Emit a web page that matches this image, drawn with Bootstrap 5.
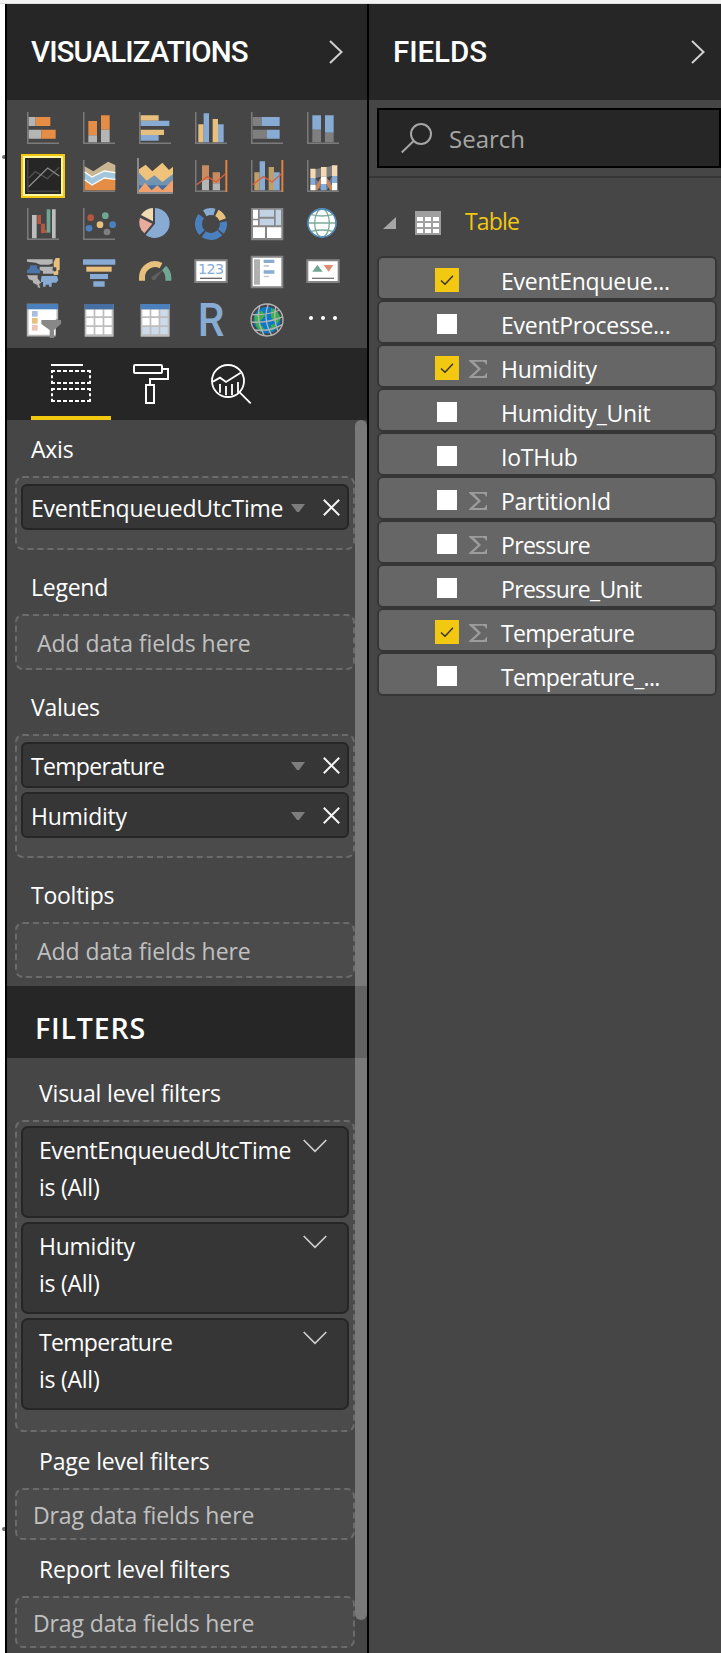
<!DOCTYPE html>
<html lang="en">
<head>
<meta charset="utf-8">
<meta name="viewport" content="width=device-width, initial-scale=1">
<title>Visualizations and Fields</title>
<link href="https://cdn.jsdelivr.net/npm/bootstrap@5.3.0/dist/css/bootstrap.min.css" rel="stylesheet">
<script src="https://cdn.jsdelivr.net/npm/bootstrap@5.3.0/dist/js/bootstrap.bundle.min.js"></script>
<style>
:root{--panel:#464646;--dark:#262626;--pill:#363636;--accent:#f2c811}
body{background:#fff;font-family:"Open Sans","Noto Sans",sans-serif;font-size:23px;letter-spacing:-.25px;color:#fff;line-height:30px;height:1653px;overflow:hidden}
svg{display:block;flex:none;overflow:visible}
.topline{height:4px;background:#f2f2f2;border-bottom:1px solid #dcdcdc}
.gutter{width:5px;background:#fff}
.gutter i{position:absolute;left:2px;width:3px;height:4px;background:#707070;border-radius:2px 0 0 2px}
.pane-viz{width:364px;background:var(--panel);border-left:2px solid #000;border-right:2px solid #000}
.pane-fields{background:var(--panel)}
.pane-head{height:96px;background:var(--dark);padding:0 24px;font-family:Roboto,sans-serif;font-weight:500;font-size:29.5px;letter-spacing:-.9px}
.pane-fields .pane-head{letter-spacing:-.05px}
.gallery{display:grid;grid-template-columns:repeat(6,56px);grid-auto-rows:48px;padding:4px 8px;height:248px;place-items:center}
.chosen{width:44px;height:44px;border:2px solid var(--accent);box-shadow:inset 0 0 0 2px #fff6a0;background:var(--dark)}
.tabs{height:72px;background:var(--dark);padding-left:24px}
.tabs .current{box-shadow:inset 0 -4px var(--accent)}
.wells{height:1233px}
.thumb{right:0;top:0;width:12px;height:1200px;border-radius:6px;background:rgba(255,255,255,.28)}
.cap{height:64px;padding:0 24px 12px}
.cap-first{height:56px}
.cap-visual{height:62px;padding-left:32px;letter-spacing:-.15px}
.cap-level{height:56px;padding-left:32px;letter-spacing:-.17px}
.well{width:340px;margin-left:8px;border:2px dashed #6b6b6b;border-radius:8px;background:#4b4b4b;padding:6px 4px 18px}
.well-empty{height:56px;padding:1px 20px 0;color:#c0c0c0;letter-spacing:-.07px}
.well-drag{height:52px;padding:2px 16px 0;color:#c0c0c0;letter-spacing:-.12px}
.pill{height:46px;background:var(--pill);border:2px solid var(--dark);border-radius:6px;padding:1px 7px 0 8px}
.pill + .pill,.fcard + .fcard{margin-top:4px}
.pill .drop{margin-right:18px}
.snug{letter-spacing:-.68px}
.well-filters{padding:4px 4px 20px}
.fcard{height:92px;background:var(--pill);border:2px solid var(--dark);border-radius:7px;padding:4px 20px 0 16px;line-height:37px}
.fcard svg{margin-top:7px}
.filters-head{height:72px;margin-top:8px;background:var(--dark);padding:11px 28px 0;font-weight:600;font-size:28.5px;letter-spacing:.8px}
.searchbox{height:60px;margin:8px 0 8px 8px;background:var(--dark);border:2px solid #000;padding:1px 0 0 22px;color:#a6a6a6;font-size:24px;letter-spacing:0}
.searchbox svg{margin-right:18px}
.rule{height:2px;background:#363636}
.tablerow{height:78px;padding-left:14px;color:var(--accent);letter-spacing:-.85px}
.tablerow svg{margin-top:12px}
.tablerow .grid-ic{margin-left:19px;margin-top:12px}
.fieldlist{margin:0 4px 0 8px}
.field{height:44px;background:#666;border:2px solid var(--pill);border-radius:6px;padding-left:56px}
.tick{width:24px;height:24px;margin-top:4px;background:var(--accent)}
.blank{width:20px;height:20px;background:#fff;margin:4px 2px 0}
.sig{width:20px;margin:2px 12px 0 10px}
.fname{padding-top:5px}
</style>
</head>
<body>
<svg width="0" height="0" class="position-absolute" aria-hidden="true">
<defs>
<symbol id="axes" viewBox="0 0 96 96"><path d="M2 0V94H96" fill="none" stroke="#7b7b7b" stroke-width="5"/></symbol>
<symbol id="right" viewBox="0 0 14 24"><path d="M1 1 12.500 12 1 23" fill="none" stroke="#d0d0d0" stroke-width="2"/></symbol>
<symbol id="down" viewBox="0 0 24 14"><path d="M.7 1 12 12.300 23.300 1" fill="none" stroke="#d0d0d0" stroke-width="1.600"/></symbol>
<symbol id="caret" viewBox="0 0 14 8"><path d="M0 0H14L8 8H6Z" fill="#7d7d7d"/></symbol>
<symbol id="cross" viewBox="0 0 17 17"><path d="M.8.8 16.200 16.200M16.200.8.8 16.200" stroke="#f4f4f4" stroke-width="2"/></symbol>
<symbol id="check" viewBox="0 0 24 24"><path d="M6 12.500 10 16.200 18 7.800" fill="none" stroke="#333" stroke-width="1.400"/></symbol>
<symbol id="sigma" viewBox="0 0 18 18"><path d="M0 0H18V4.500H17Q16.500 1.800 14 1.800H5L12 9 4.500 16H14Q16.500 16 17 13H18V18H0V17L8.800 9 0 1Z" fill="#9c9c9c"/></symbol>
</defs>
</svg>
<div class="topline"></div>
<div class="d-flex">
<div class="gutter"><i style="top:155px"></i><i style="top:1527px"></i></div>

<section class="pane-viz flex-shrink-0">
  <header class="pane-head d-flex align-items-center justify-content-between"><span>VISUALIZATIONS</span><svg width="14" height="24"><use href="#right"/></svg></header>

  <div class="gallery">
    <svg width="32" height="32" viewBox="0 0 96 96"><use href="#axes" width="96" height="96"/><path fill="#b5b5b5" d="M5 15h21v27H5zM5 53h38v27H5z"/><path fill="#e68d45" d="M26 15h44v27H26zM43 53h43v27H43z"/></svg>
    <svg width="32" height="32" viewBox="0 0 96 96"><use href="#axes" width="96" height="96"/><path fill="#e68d45" d="M16 27h26v43H16zM54 10h26v43H54z"/><path fill="#b5b5b5" d="M16 70h26v21H16zM54 53h26v38H54z"/></svg>
    <svg width="32" height="32" viewBox="0 0 96 96"><use href="#axes" width="96" height="96"/><path fill="#e8c07e" d="M5 10h54v16H5zM5 53h70v16H5z"/><path fill="#87abd3" d="M5 26h86v16H5zM5 69h54v17H5z"/></svg>
    <svg width="32" height="32" viewBox="0 0 96 96"><use href="#axes" width="96" height="96"/><path fill="#e8c07e" d="M10 37h16v54H10zM53 21h16v70H53z"/><path fill="#87abd3" d="M26 4h16v87H26zM69 37h17v54H69z"/></svg>
    <svg width="32" height="32" viewBox="0 0 96 96"><use href="#axes" width="96" height="96"/><path fill="#7f7f7f" d="M5 15h27v27H5zM5 53h43v27H5z"/><path fill="#87abd3" d="M32 15h54v27H32zM48 53h38v27H48z"/></svg>
    <svg width="32" height="32" viewBox="0 0 96 96"><use href="#axes" width="96" height="96"/><path fill="#87abd3" d="M16 10h26v43H16zM54 10h26v52H54z"/><path fill="#7f7f7f" d="M16 53h26v38H16zM54 62h26v29H54z"/></svg>

    <div class="chosen d-flex align-items-center justify-content-center"><svg width="32" height="32" viewBox="0 0 96 96" fill="none"><path d="M2 0V94H96" stroke="#444" stroke-width="5"/><path d="M5 54 25 35 61 56 97 22" stroke="#505050" stroke-width="4"/><path d="M5 80 62 24 97 48" stroke="#8c8c8c" stroke-width="4"/></svg></div>
    <svg width="32" height="32" viewBox="0 0 96 96"><use href="#axes" width="96" height="96"/><path fill="#c8b592" d="M5 19 31 34 75 5 97 15V40L64 35 27 53 5 38Z"/><path fill="#a3c6dd" d="M5 36 27 52 64 34 97 39V58L64 54 27 76 5 58Z"/><path fill="#e68d45" d="M5 58 27 76 64 54 97 58V91H5Z"/><path d="M5 36 27 51 64 33 97 38M5 59 27 75 64 54 97 58" fill="none" stroke="#fff" stroke-width="4"/></svg>
    <svg width="32" height="32" viewBox="0 0 96 96"><path fill="#efc37c" d="M0 28 20 14 40 34 70 8 90 30 102 20V60L70 68H23L0 50Z"/><path fill="#7393b3" d="M0 38 23 62 46 46 70 66 102 42V98H0Z"/><path fill="#466fa3" d="M0 76H102V98H0Z"/><path fill="#f2a16d" d="M0 90 18 68 38 91 55 76 70 91 102 60V98H0Z"/><path d="M-3-6V99H102" fill="none" stroke="#8a8a8a" stroke-width="6"/></svg>
    <svg width="32" height="32" viewBox="0 0 96 96"><use href="#axes" width="96" height="96"/><path fill="#c68b5e" d="M21 16h21v44H21zM53 37h22v33H53z"/><path fill="#b5b5b5" d="M21 60h21v31H21zM53 70h22v21H53z"/><path fill="#e0833f" d="M91 0h6v96h-6z"/><path d="M5 74 37 50 63 66 91 42" fill="none" stroke="#d9603f" stroke-width="4"/></svg>
    <svg width="32" height="32" viewBox="0 0 96 96"><use href="#axes" width="96" height="96"/><path fill="#bd9f6b" d="M10 37h16v54H10zM53 21h16v70H53z"/><path fill="#87abd3" d="M26 4h16v87H26zM69 37h17v54H69z"/><path fill="#e0833f" d="M91 0h6v96h-6z"/><path d="M5 74 37 50 63 66 91 42" fill="none" stroke="#d9603f" stroke-width="4"/></svg>
    <svg width="32" height="32" viewBox="0 0 96 96"><use href="#axes" width="96" height="96"/><path fill="#7d7d7d" d="M26 28 42 24V50L26 54ZM59 22 75 17V48L59 52Z"/><path fill="#87abd3" d="M10 54h16v20H10zM42 72h17v19H42zM75 48h16v21H75z"/><path fill="#5f7fa5" d="M26 56 42 74V91L26 72ZM59 76 75 50V68L59 91Z"/><path fill="#c98657" d="M26 78 42 52V72L32 91H26ZM59 52 75 76V91H69L59 72Z"/><path fill="#f3dab4" d="M10 26h16v28H10zM42 21h17v29H42zM75 16h16v32H75z"/><path fill="#fff" d="M10 74h16v17H10zM42 50h17v22H42zM75 69h16v22H75z"/></svg>

    <svg width="32" height="32" viewBox="0 0 96 96"><use href="#axes" width="96" height="96"/><path fill="#bdbdbd" d="M15 21h14v70H15zM75 4h11v87H75z"/><path fill="#b55641" d="M31 21h11v26h12v19h5v9H42V48H31z"/><path fill="#70a794" d="M59 4h11v70H59z"/></svg>
    <svg width="32" height="32" viewBox="0 0 96 96"><use href="#axes" width="96" height="96"/><circle cx="23" cy="29" r="10" fill="#b55641"/><circle cx="67" cy="23" r="10" fill="#70a794"/><circle cx="51" cy="50" r="10" fill="#e8c07e"/><circle cx="18" cy="61" r="10" fill="#4a80bd"/><circle cx="89" cy="50" r="10" fill="#4a80bd"/><circle cx="72" cy="72" r="10" fill="#7f7f7f"/></svg>
    <svg width="32" height="32" viewBox="0 0 96 96"><path fill="#87abd3" d="M48 0A45 45 0 1 1 20 81L48 47Z"/><path fill="#f0dab4" d="M42 0V40L6 21A46 46 0 0 1 42 0Z"/><path fill="#e8ac9f" d="M3 29 40 47 16 76A45 45 0 0 1 3 29Z"/></svg>
    <svg width="32" height="32" viewBox="0 0 96 96" fill="none" stroke-width="21"><g stroke="#4a80bd"><circle cx="48" cy="48" r="37.500" pathLength="360" stroke-dasharray="47 360" transform="rotate(-10 48 48)"/><circle cx="48" cy="48" r="37.500" pathLength="360" stroke-dasharray="80 360" transform="rotate(45 48 48)"/><circle cx="48" cy="48" r="37.500" pathLength="360" stroke-dasharray="82 360" transform="rotate(136 48 48)"/></g><circle cx="48" cy="48" r="37.500" pathLength="360" stroke-dasharray="46 360" transform="rotate(-120 48 48)" stroke="#87abd3"/><circle cx="48" cy="48" r="37.500" pathLength="360" stroke-dasharray="41 360" transform="rotate(-62 48 48)" stroke="#e8c07e"/></svg>
    <svg width="32" height="32" viewBox="0 0 96 96"><path fill="#868686" d="M0 0h97v97H0z"/><path fill="#fff" d="M6 5h15v27H6zM6 37h15v15H6zM6 58h36v32H6zM48 58h43v32H48z"/><path fill="#c3d3e6" d="M26 5h43v21H26zM26 32h43v20H26zM74 5h16v47H74z"/></svg>
    <svg width="32" height="32" viewBox="0 0 96 96" fill="none" stroke="#7cab98" stroke-width="4"><circle cx="45" cy="45" r="42" fill="#fff"/><ellipse cx="45" cy="45" rx="22" ry="42"/><path d="M3 45H87M13 20Q45 28 77 20M13 70Q45 62 77 70"/><circle cx="45" cy="45" r="42" stroke="#4a86c4"/></svg>

    <svg width="32" height="32" viewBox="0 0 96 96"><path fill="#b5b5b5" d="M0 10H77V22L66 26H40L26 20 0 17ZM38 32H78L76 42 82 46V53H48V46L38 42ZM0 58H32V68L43 80 36 84 40 96 32 94V88L18 80V74L6 70Z"/><path fill="#4c74a8" d="M10 28H30V36L40 44V52H0V42L6 40Z"/><path fill="#87abd3" d="M44 60H90L94 72 88 80H74V92H66V86H56V92H48V78H42V70Z"/><path fill="#e8c07e" d="M86 6H98V42H94V56L80 58V48L88 44V34H80V18Z"/></svg>
    <svg width="32" height="32" viewBox="0 0 96 96"><path fill="#87abd3" d="M0 10h97v16H0zM21 54h54v15H21zM31 76h34v16H31z"/><path fill="#e8c07e" d="M10 32h76v15H10z"/></svg>
    <svg width="32" height="32" viewBox="0 0 96 96"><g fill="none" stroke-width="18"><path d="M9 74V64A39 40 0 0 1 66 29" stroke="#e8c07e"/><path d="M75 36A39 40 0 0 1 88 64V74" stroke="#70a794"/></g><path fill="#5f5f5f" d="M36 64 73 40 49 72Q40 76 36 64Z"/></svg>
    <svg width="32" height="32" viewBox="0 0 96 96"><path fill="#fff" stroke="#868686" stroke-width="6" d="M1 13h94v65H1z"/><text x="48" y="53" text-anchor="middle" font-family="DejaVu Sans,sans-serif" font-size="43" letter-spacing="0" textLength="78" fill="#87abd3">123</text><path stroke="#666" stroke-width="4" d="M15 67H81"/></svg>
    <svg width="32" height="32" viewBox="0 0 96 96"><path fill="#fff" stroke="#868686" stroke-width="6" d="M2 2h92v92H2z"/><path fill="#b0b0b0" d="M9 10h18v76H9z"/><path fill="#87abd3" d="M38 11h32v10H38zM38 43h32v10H38z"/><path fill="#c8c8c8" d="M38 27h16v5H38zM38 59h16v5H38z"/></svg>
    <svg width="32" height="32" viewBox="0 0 96 96"><path fill="#fff" stroke="#868686" stroke-width="6" d="M1 13h94v65H1z"/><path fill="#70a794" d="M16 47 31 26 47 47Z"/><path fill="#e08a70" d="M50 27H79L65 47Z"/><path stroke="#777" stroke-width="4" d="M15 67H81"/></svg>

    <svg width="32" height="32" viewBox="0 0 96 96"><path fill="#fff" stroke="#b8b8b8" stroke-width="5" d="M2 2h89v93H2z"/><path fill="#4a80bd" d="M0 0h93v16H0z"/><path fill="#a8c0dd" d="M15 21h17v17H15z"/><path fill="#e8c07e" d="M15 42h17v17H15z"/><path fill="#efc4b8" d="M15 63h17v17H15z"/><path fill="#464646" d="M86 47h10v54H86z"/><path fill="#888" d="M43 48H102V60L81 78V102H68V78L43 60Z"/></svg>
    <svg width="32" height="32" viewBox="0 0 96 96"><path fill="#bdbdbd" d="M5 0h87v98H5z"/><path fill="#466fa3" d="M5 0h87v16H5z"/><path fill="#fff" d="M10 17h22v20H10zM37 17h22v20H37zM64 17h22v20H64zM10 42h22v22H10zM37 42h22v22H37zM64 42h22v22H64zM10 69h22v22H10zM37 69h22v22H37zM64 69h22v22H64z"/></svg>
    <svg width="32" height="32" viewBox="0 0 96 96"><path fill="#bdbdbd" d="M5 0h87v98H5z"/><path fill="#4a80bd" d="M5 0h87v16H5z"/><path fill="#fff" d="M10 17h22v20H10zM37 17h22v20H37zM10 42h22v22H10zM37 42h22v22H37z"/><path fill="#ccdbea" d="M64 17h22v20H64zM64 42h22v22H64zM10 69h22v22H10zM37 69h22v22H37zM64 69h22v22H64z"/></svg>
    <svg width="32" height="32" viewBox="0 0 96 96"><text x="8" y="97" font-family="Roboto,sans-serif" font-weight="500" font-size="136" letter-spacing="0" textLength="80" lengthAdjust="spacingAndGlyphs" fill="#87abd3">R</text></svg>
    <svg width="32" height="32" viewBox="0 0 96 96" fill="none"><circle cx="48" cy="48" r="40" fill="#0b78c8"/><path fill="#3cb04a" d="M10 40Q18 24 34 20L42 36 24 54 40 76 30 84Q12 70 10 40ZM60 12Q84 20 88 44L78 60 60 40ZM60 62 76 60 70 76 58 82Z"/><g stroke="#b4b4b4" stroke-width="4"><circle cx="48" cy="48" r="48"/><path d="M26 6Q14 50 40 95M52 0Q34 46 62 94M74 8Q66 50 82 82M4 32Q50 34 86 18M0 54Q52 58 96 38M10 78Q56 84 94 62"/></g></svg>
    <svg width="32" height="32" viewBox="0 0 96 96"><g fill="#fff"><circle cx="12" cy="42" r="6"/><circle cx="48" cy="42" r="6"/><circle cx="84" cy="42" r="6"/></g></svg>
  </div>

  <nav class="tabs d-flex">
    <a class="current"><svg width="80" height="72" viewBox="0 0 240 216" fill="none" stroke="#fff" stroke-width="6"><path d="M60 51H156"/><path d="M60 69H180M60 105H180M60 123H180M60 159H180" stroke-dasharray="12 6"/><path d="M63 66V108M177 66V108M63 120V162M177 120V162" stroke-dasharray="9 7"/></svg></a>
    <a><svg width="80" height="72" viewBox="0 0 240 216" fill="none" stroke="#fff" stroke-width="6"><rect x="69" y="51" width="84" height="24" rx="3"/><path d="M153 63H171V93H117V108"/><rect x="105" y="111" width="24" height="54"/></svg></a>
    <a><svg width="80" height="72" viewBox="0 0 240 216" fill="none" stroke="#fff" stroke-width="5.500"><circle cx="111" cy="99" r="48"/><path d="M146 133 179 166M66 101 87 89 105 102 149 74M87 108V134M105 114V142M123 108V142M141 102V134"/></svg></a>
  </nav>

  <div class="wells position-relative">
    <div class="cap cap-first d-flex align-items-end">Axis</div>
    <div class="well">
      <div class="pill d-flex align-items-center"><span class="flex-grow-1">EventEnqueuedUtcTime</span><svg class="drop" width="14" height="8"><use href="#caret"/></svg><svg width="17" height="17"><use href="#cross"/></svg></div>
    </div>
    <div class="cap d-flex align-items-end">Legend</div>
    <div class="well well-empty d-flex align-items-center">Add data fields here</div>
    <div class="cap d-flex align-items-end">Values</div>
    <div class="well">
      <div class="pill d-flex align-items-center"><span class="flex-grow-1 snug">Temperature</span><svg class="drop" width="14" height="8"><use href="#caret"/></svg><svg width="17" height="17"><use href="#cross"/></svg></div>
      <div class="pill d-flex align-items-center"><span class="flex-grow-1">Humidity</span><svg class="drop" width="14" height="8"><use href="#caret"/></svg><svg width="17" height="17"><use href="#cross"/></svg></div>
    </div>
    <div class="cap d-flex align-items-end">Tooltips</div>
    <div class="well well-empty d-flex align-items-center">Add data fields here</div>

    <div class="filters-head d-flex align-items-center">FILTERS</div>
    <div class="cap cap-visual d-flex align-items-end">Visual level filters</div>
    <div class="well well-filters">
      <div class="fcard d-flex justify-content-between"><div>EventEnqueuedUtcTime<br>is (All)</div><svg width="24" height="14"><use href="#down"/></svg></div>
      <div class="fcard d-flex justify-content-between"><div>Humidity<br>is (All)</div><svg width="24" height="14"><use href="#down"/></svg></div>
      <div class="fcard d-flex justify-content-between"><div><span class="snug">Temperature</span><br>is (All)</div><svg width="24" height="14"><use href="#down"/></svg></div>
    </div>
    <div class="cap cap-level d-flex align-items-end">Page level filters</div>
    <div class="well well-drag d-flex align-items-center">Drag data fields here</div>
    <div class="cap cap-level d-flex align-items-end">Report level filters</div>
    <div class="well well-drag d-flex align-items-center">Drag data fields here</div>
    <div class="thumb position-absolute"></div>
  </div>
</section>

<section class="pane-fields flex-grow-1">
  <header class="pane-head d-flex align-items-center justify-content-between pe-3"><span>FIELDS</span><svg width="14" height="24"><use href="#right"/></svg></header>
  <div class="searchbox d-flex align-items-center"><svg width="30" height="30" viewBox="0 0 30 30" fill="none" stroke="#a6a6a6" stroke-width="2"><circle cx="20" cy="10" r="10"/><path d="M12.600 17 .7 28.500"/></svg><span>Search</span></div>
  <div class="rule"></div>
  <div class="tablerow d-flex align-items-center">
    <svg width="13" height="12"><path d="M13 0V12H0Z" fill="#a6a6a6"/></svg>
    <svg class="grid-ic" width="26" height="24"><path fill="#9f9f9f" d="M0 0h26v24H0z"/><path fill="#fff" d="M2 6h6v4H2zM10 6h6v4h-6zM18 6h6v4h-6zM2 12h6v4H2zM10 12h6v4h-6zM18 12h6v4h-6zM2 18h6v4H2zM10 18h6v4h-6zM18 18h6v4h-6z"/></svg>
    <span class="ms-4 pt-2">Table</span>
  </div>
  <div class="fieldlist">
    <div class="field d-flex align-items-center"><div class="tick"><svg width="24" height="24"><use href="#check"/></svg></div><div class="sig"></div><span class="fname">EventEnqueue...</span></div>
    <div class="field d-flex align-items-center"><div class="blank"></div><div class="sig"></div><span class="fname">EventProcesse...</span></div>
    <div class="field d-flex align-items-center"><div class="tick"><svg width="24" height="24"><use href="#check"/></svg></div><div class="sig"><svg width="18" height="18" class="mt-1"><use href="#sigma"/></svg></div><span class="fname">Humidity</span></div>
    <div class="field d-flex align-items-center"><div class="blank"></div><div class="sig"></div><span class="fname">Humidity_Unit</span></div>
    <div class="field d-flex align-items-center"><div class="blank"></div><div class="sig"></div><span class="fname">IoTHub</span></div>
    <div class="field d-flex align-items-center"><div class="blank"></div><div class="sig"><svg width="18" height="18" class="mt-1"><use href="#sigma"/></svg></div><span class="fname">PartitionId</span></div>
    <div class="field d-flex align-items-center"><div class="blank"></div><div class="sig"><svg width="18" height="18" class="mt-1"><use href="#sigma"/></svg></div><span class="fname snug">Pressure</span></div>
    <div class="field d-flex align-items-center"><div class="blank"></div><div class="sig"></div><span class="fname snug">Pressure_Unit</span></div>
    <div class="field d-flex align-items-center"><div class="tick"><svg width="24" height="24"><use href="#check"/></svg></div><div class="sig"><svg width="18" height="18" class="mt-1"><use href="#sigma"/></svg></div><span class="fname snug">Temperature</span></div>
    <div class="field d-flex align-items-center"><div class="blank"></div><div class="sig"></div><span class="fname snug">Temperature_...</span></div>
  </div>
</section>
</div>
</body>
</html>
